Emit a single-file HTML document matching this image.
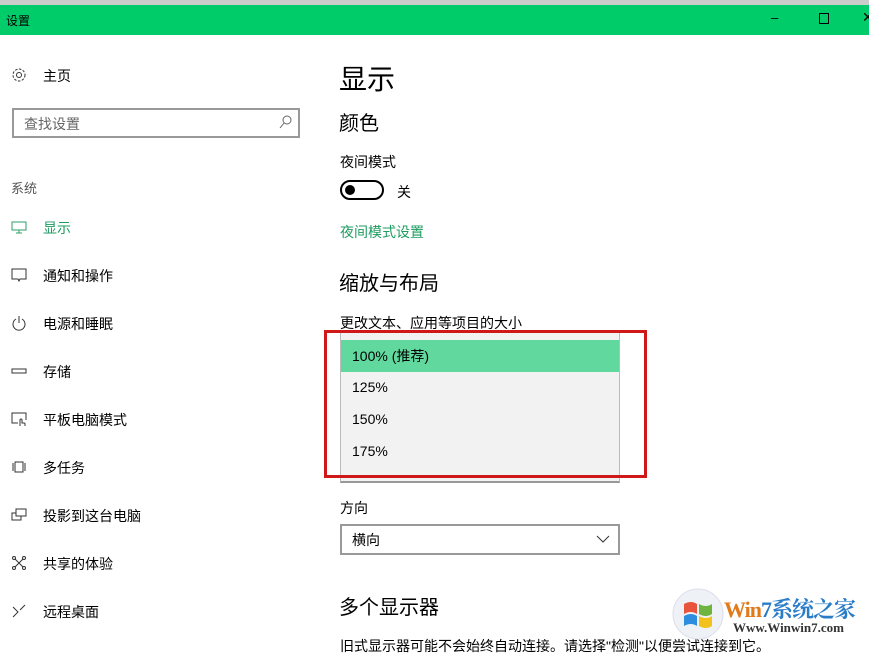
<!DOCTYPE html>
<html><head><meta charset="utf-8"><style>
*{margin:0;padding:0;box-sizing:border-box}
body{width:869px;height:643px;overflow:hidden;background:#fff;font-family:"Liberation Sans","Noto Sans CJK SC",sans-serif;color:#000;position:relative}
.a{position:absolute;white-space:nowrap}
.nav{font-size:14px}
</style></head><body>
<div class="a" style="left:0;top:0;width:869px;height:5px;background:#ccc"></div>
<div class="a" style="left:0;top:5px;width:869px;height:30px;background:#00cc6a"></div>
<div class="a" style="left:6px;top:12px;font-size:12px">设置</div>
<div class="a" style="left:771px;top:10px;font-size:13px">–</div>
<div class="a" style="left:819px;top:13px;width:10px;height:11px;border:1px solid #000"></div>
<div class="a" style="left:862px;top:9px;font-size:14px">✕</div>

<svg class="a" style="left:11px;top:67px" width="16" height="16" viewBox="0 0 16 16"><circle cx="8" cy="8" r="2.5" fill="none" stroke="#333"/><circle cx="8" cy="8" r="6" fill="none" stroke="#333" stroke-dasharray="2.5 1.5"/></svg>
<div class="a nav" style="left:43px;top:66px">主页</div>
<div class="a" style="left:12px;top:108px;width:288px;height:30px;border:2px solid #999"></div>
<div class="a" style="left:24px;top:114px;font-size:14px;color:#666">查找设置</div>
<svg class="a" style="left:277px;top:114px" width="16" height="16" viewBox="0 0 16 16"><circle cx="10" cy="6" r="4" fill="none" stroke="#666"/><path d="M7 9L3 14" stroke="#666"/></svg>
<div class="a" style="left:11px;top:178px;font-size:13px;color:#555">系统</div>

<svg class="a" style="left:11px;top:219px" width="16" height="16" viewBox="0 0 16 16"><rect x="1" y="3" width="14" height="8" fill="none" stroke="#2c9f6a"/><path d="M5 14h6M8 11v3" stroke="#2c9f6a"/></svg>
<div class="a nav" style="left:43px;top:218px;color:#1e9b5f">显示</div>
<svg class="a" style="left:11px;top:267px" width="16" height="16" viewBox="0 0 16 16"><path d="M1 2h14v10H9l-1 2-1-2H1z" fill="none" stroke="#333"/></svg>
<div class="a nav" style="left:43px;top:266px">通知和操作</div>
<svg class="a" style="left:11px;top:315px" width="16" height="16" viewBox="0 0 16 16"><path d="M5 4a6 6 0 1 0 6 0M8 1v7" fill="none" stroke="#333"/></svg>
<div class="a nav" style="left:43px;top:314px">电源和睡眠</div>
<svg class="a" style="left:11px;top:363px" width="16" height="16" viewBox="0 0 16 16"><rect x="1" y="6" width="14" height="4" fill="none" stroke="#333"/></svg>
<div class="a nav" style="left:43px;top:362px">存储</div>
<svg class="a" style="left:11px;top:411px" width="16" height="16" viewBox="0 0 16 16"><path d="M7 12H1V2h14v7M9 15v-6a1 1 0 0 1 2 0v3h2a1 1 0 0 1 1 1v2" fill="none" stroke="#333"/></svg>
<div class="a nav" style="left:43px;top:410px">平板电脑模式</div>
<svg class="a" style="left:11px;top:459px" width="16" height="16" viewBox="0 0 16 16"><rect x="4" y="3" width="8" height="10" fill="none" stroke="#333"/><path d="M2 4v8M14 4v8" stroke="#333"/></svg>
<div class="a nav" style="left:43px;top:458px">多任务</div>
<svg class="a" style="left:11px;top:507px" width="16" height="16" viewBox="0 0 16 16"><rect x="5" y="2" width="10" height="7" fill="none" stroke="#333"/><path d="M5 6H1v7h9v-4" fill="none" stroke="#333"/></svg>
<div class="a nav" style="left:43px;top:506px">投影到这台电脑</div>
<svg class="a" style="left:11px;top:555px" width="16" height="16" viewBox="0 0 16 16"><path d="M3 3l10 10M13 3L3 13" stroke="#333"/><circle cx="3" cy="3" r="1.5" fill="#fff" stroke="#333"/><circle cx="13" cy="3" r="1.5" fill="#fff" stroke="#333"/><circle cx="3" cy="13" r="1.5" fill="#fff" stroke="#333"/><circle cx="13" cy="13" r="1.5" fill="#fff" stroke="#333"/></svg>
<div class="a nav" style="left:43px;top:554px">共享的体验</div>
<svg class="a" style="left:11px;top:603px" width="16" height="16" viewBox="0 0 16 16"><path d="M2 4l5 5-5 5M14 2l-5 5" fill="none" stroke="#333"/></svg>
<div class="a nav" style="left:43px;top:602px">远程桌面</div>

<div class="a" style="left:339px;top:58px;font-size:28px">显示</div>
<div class="a" style="left:339px;top:107px;font-size:20px">颜色</div>
<div class="a" style="left:340px;top:152px;font-size:14px">夜间模式</div>
<div class="a" style="left:340px;top:180px;width:44px;height:20px;border:2px solid #000;border-radius:10px"></div>
<div class="a" style="left:345px;top:185px;width:10px;height:10px;border-radius:5px;background:#000"></div>
<div class="a" style="left:397px;top:182px;font-size:14px">关</div>
<div class="a" style="left:340px;top:222px;font-size:14px;color:#1e9b5f">夜间模式设置</div>
<div class="a" style="left:339px;top:267px;font-size:20px">缩放与布局</div>
<div class="a" style="left:340px;top:313px;font-size:14px">更改文本、应用等项目的大小</div>

<div class="a" style="left:340px;top:332px;width:280px;height:151px;background:#f2f2f2;border:1px solid #bbb;border-bottom:2px solid #999"></div>
<div class="a" style="left:341px;top:340px;width:278px;height:32px;background:#61d99e"></div>
<div class="a" style="left:352px;top:346px;font-size:14px">100% (推荐)</div>
<div class="a" style="left:352px;top:379px;font-size:14px">125%</div>
<div class="a" style="left:352px;top:411px;font-size:14px">150%</div>
<div class="a" style="left:352px;top:443px;font-size:14px">175%</div>
<div class="a" style="left:324px;top:330px;width:323px;height:148px;border:3px solid #d01818"></div>

<div class="a" style="left:340px;top:498px;font-size:14px">方向</div>
<div class="a" style="left:340px;top:524px;width:280px;height:31px;border:2px solid #999"></div>
<div class="a" style="left:352px;top:530px;font-size:14px">横向</div>
<svg class="a" style="left:596px;top:534px" width="14" height="10" viewBox="0 0 14 10"><path d="M1 2l6 6 6-6" fill="none" stroke="#333"/></svg>
<div class="a" style="left:339px;top:591px;font-size:20px">多个显示器</div>
<div class="a" style="left:340px;top:636px;font-size:14px">旧式显示器可能不会始终自动连接。请选择"检测"以便尝试连接到它。</div>

<svg class="a" style="left:672px;top:588px" width="52" height="52" viewBox="0 0 52 52"><circle cx="26" cy="26" r="25" fill="#eef2f6" stroke="#dde"/><path d="M12 16q7-4 13 0v10q-6-4-13 0z" fill="#e8553a"/><path d="M27 16q7 4 13 0v10q-6 4-13 0z" fill="#6fb43f"/><path d="M12 28q7-4 13 0v10q-6-4-13 0z" fill="#2f8de0"/><path d="M27 28q7 4 13 0v10q-6 4-13 0z" fill="#f3c11b"/></svg>
<div class="a" style="left:724px;top:593px;font-size:22px;font-weight:bold;font-family:'Liberation Serif','Noto Serif CJK SC',serif;color:#e07a1a;letter-spacing:-1px">Win<span style="color:#2a7cc7">7系统之家</span></div>
<div class="a" style="left:733px;top:620px;font-size:13px;font-weight:bold;font-family:'Liberation Serif',serif;color:#333">Www.Winwin7.com</div>
</body></html>
